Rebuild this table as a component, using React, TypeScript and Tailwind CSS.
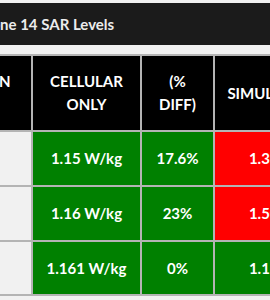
const rows = [
  { label: "Head", cell: "1.15 W/kg", diff: "17.6%", simul: "1.39 W/kg", bad: true },
  { label: "Body", cell: "1.16 W/kg", diff: "23%", simul: "1.50 W/kg", bad: true },
  { label: "Limb", cell: "1.161 W/kg", diff: "0%", simul: "1.16 W/kg", bad: false },
]

export default function App() {
  return (
    <div className="h-[300px] w-[270px] overflow-hidden bg-[#f1f1f1] pt-[3px] font-['Lato','Noto_Sans',sans-serif]">
      <div className="flex h-[42px] items-center bg-[#1b1b1b]">
        <h2 className="-ml-[30px] whitespace-nowrap text-[15px] font-bold text-[#ececec]">iPhone 14 SAR Levels</h2>
      </div>

      <div className="mt-[9px] -ml-[100px] grid w-max grid-cols-[131px_107px_71px_139px] grid-rows-[74px_53px_53px_52px] gap-[2px] border-y-2 border-[#b4b4b4] bg-[#b4b4b4] text-[15px] font-bold text-white">
        <div className="flex items-center justify-center bg-black pl-[14px] text-center uppercase leading-[23px]">
          Location
          <br />
          SAR
        </div>
        <div className="flex items-center justify-center bg-black text-center uppercase leading-[23px]">
          Cellular
          <br />
          Only
        </div>
        <div className="flex items-center justify-center bg-black text-center uppercase leading-[23px]">
          (%
          <br />
          Diff)
        </div>
        <div className="flex items-center justify-center bg-black text-center uppercase leading-[23px]">
          Simultaneous
        </div>

        {rows.map((r) => (
          <div key={r.label} className="contents">
            <div className="flex items-center justify-center bg-[#f1f1f1] text-[#f1f1f1]">{r.label}</div>
            <div className="flex items-center justify-center bg-[#008000]">{r.cell}</div>
            <div className="flex items-center justify-center bg-[#008000]">{r.diff}</div>
            <div className={`flex items-center justify-center ${r.bad ? "bg-[#ff0000]" : "bg-[#008000]"}`}>
              {r.simul}
            </div>
          </div>
        ))}
      </div>
    </div>
  )
}
